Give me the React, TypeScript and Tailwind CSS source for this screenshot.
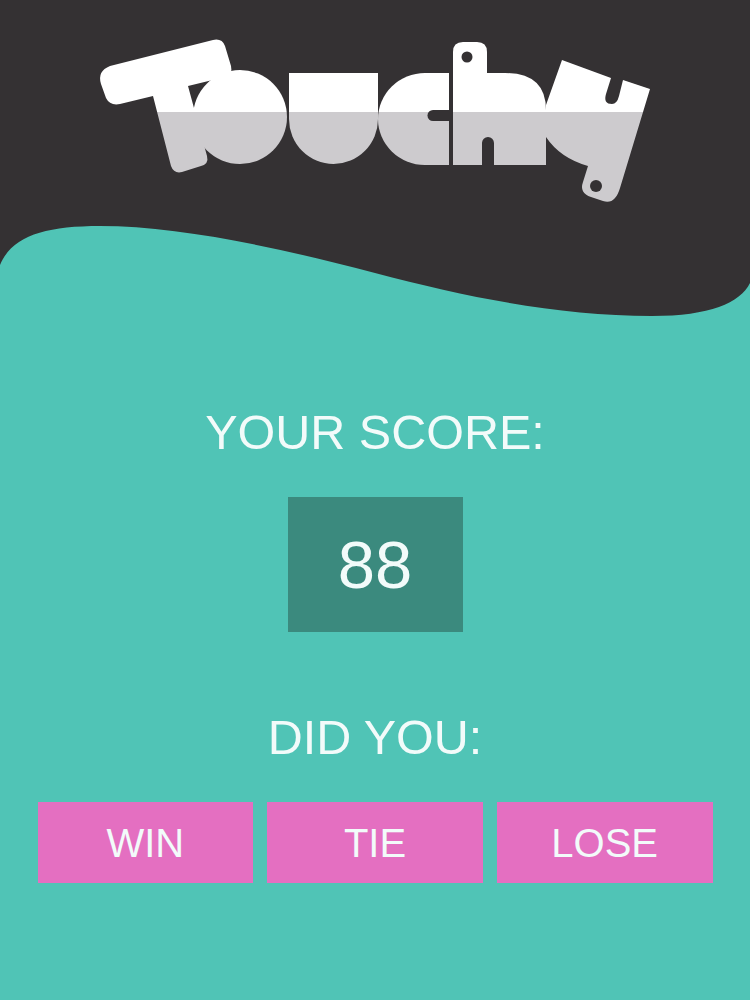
export default function App() {
  return (
    <div className="flex h-[1000px] w-full flex-col items-center bg-[#50c4b6] font-['Liberation_Sans',Arial,sans-serif] text-[#f2fbfa]">
      <svg viewBox="0 0 750 320" className="block h-[320px] w-[750px] shrink-0" role="img" aria-label="Touchy logo">
        <defs>
          <linearGradient id="tone" gradientUnits="userSpaceOnUse" x1="0" y1="0" x2="0" y2="320">
            <stop offset="0.3485" stopColor="#ffffff" />
            <stop offset="0.3485" stopColor="#cdcbce" />
          </linearGradient>
        </defs>
        <path d="M0 0H750V283C740 303 710 316 652 316C560 316 470 298 375 273C280 248 180 226 100 226C45 226 12 236 0 265Z" fill="#343133" />
        <g fill="url(#tone)">
          <circle cx="240" cy="117" r="47" />
          <path d="M110 66L213 40Q222 38 225 46L231 66Q233 74 225 77L188 86L207 156Q209 164 201 166L182 172Q174 174 171 166L153 96L120 104Q110 106 106 98L101 84Q97 71 110 66Z" />
          <path d="M289 73H378V119A44.5 45 0 0 1 289 119Z" />
          <path d="M449 73H425A47 46 0 0 0 425 165H449Z" />
          <path d="M453 52Q453 42 463 42H477Q487 42 487 52V73H505Q546 73 546 110V165H494V143A6 6 0 0 0 482 143V165H453Z" />
          <path d="M562 60L611 78L606 94Q603 104 612 104Q617 104 619 96L623 80L650 89L620 188Q615 205 603 201L591 197Q579 193 583 182L588 166Q560 158 546 137L546 105Z" />
        </g>
        <circle cx="467" cy="57" r="5.5" fill="#343133" />
        <circle cx="596" cy="186" r="6" fill="#343133" />
        <path d="M449 110H433A5.5 5.5 0 0 0 433 121H449Z" fill="#343133" />
      </svg>
      <div className="mt-[83px] text-[48.5px] leading-[58px]">YOUR SCORE:</div>
      <div className="mt-[36px] flex h-[135px] w-[175px] items-center justify-center bg-[#3b8a7e] text-[67px] leading-none">88</div>
      <div className="mt-[76px] text-[48.5px] leading-[58px]">DID YOU:</div>
      <div className="mt-[36px] flex w-[675px] gap-[14px]">
        <button className="h-[81px] flex-1 bg-[#e46fc1] text-[40px]">WIN</button>
        <button className="h-[81px] flex-1 bg-[#e46fc1] text-[40px]">TIE</button>
        <button className="h-[81px] flex-1 bg-[#e46fc1] text-[40px]">LOSE</button>
      </div>
    </div>
  );
}
